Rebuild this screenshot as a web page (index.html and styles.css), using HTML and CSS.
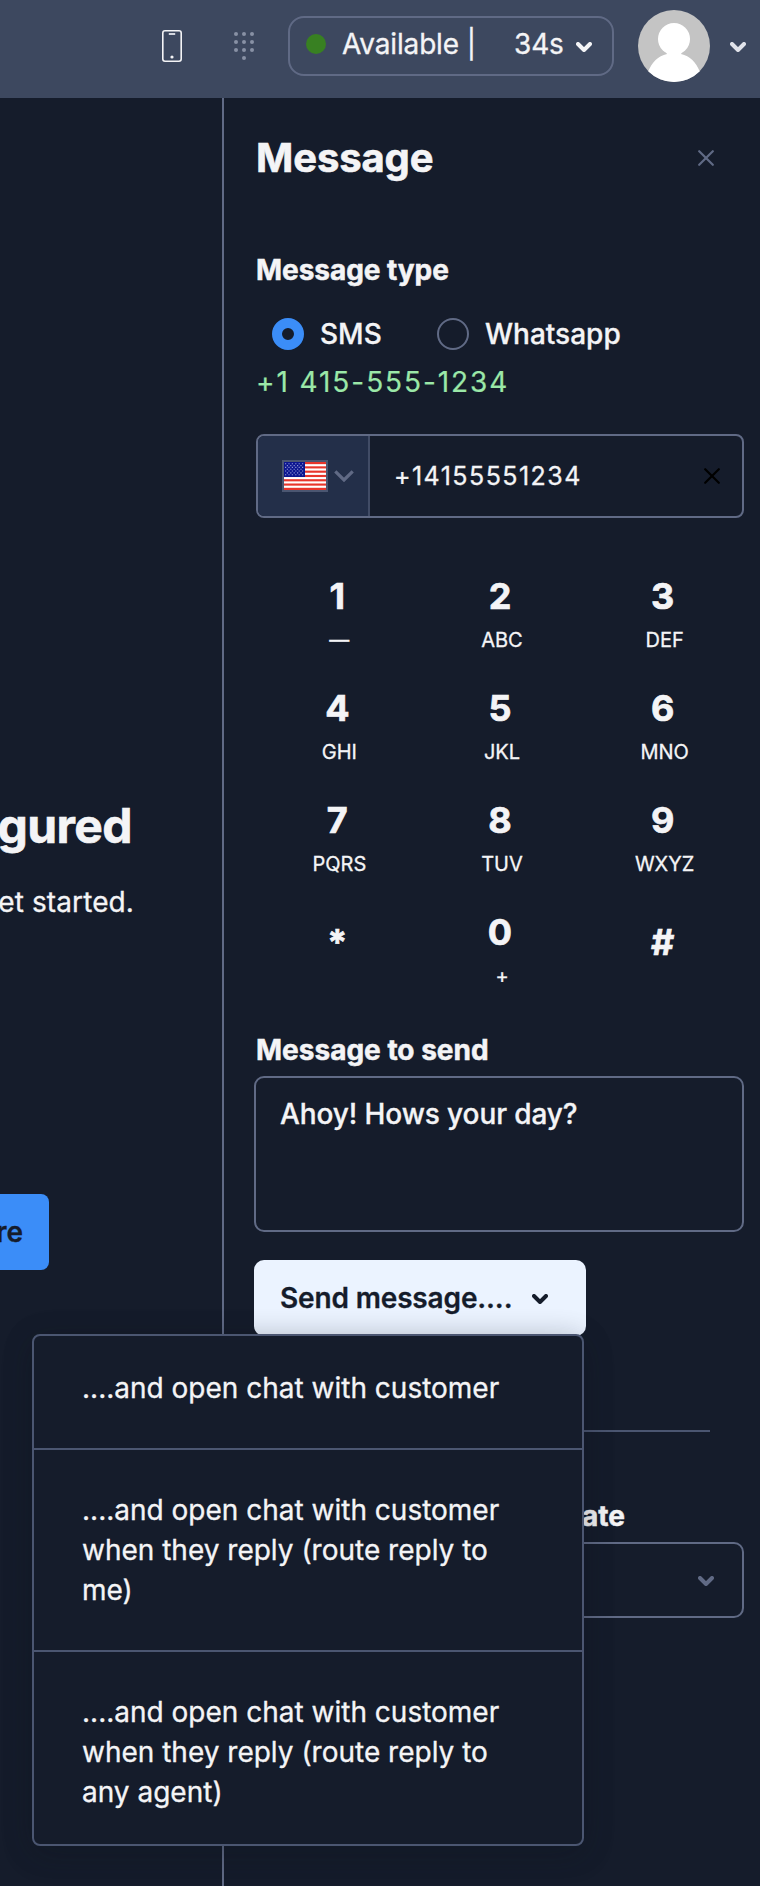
FILE: index.html
```html
<!DOCTYPE html>
<html lang="en">
<head>
<meta charset="utf-8">
<title>Message</title>
<link rel="stylesheet" href="styles.css">
</head>
<body>
<div class="app">
  <header class="topbar">
    <svg class="icon-phone" width="20" height="32" viewBox="0 0 20 32" fill="none" stroke="#f4f4f6" stroke-width="1.6"><rect x=".8" y=".8" width="18.4" height="30.4" rx="2.2"/><path d="M6.8 4h6.4" stroke="#d4d7df" stroke-width="2"/><circle cx="10" cy="27" r="1.6" fill="#f4f4f6" stroke="none"/></svg>
    <svg class="icon-dialpad" width="20" height="28" viewBox="0 0 20 28" fill="#8891a5"><circle cx="2" cy="2" r="2"/><circle cx="10" cy="2" r="2"/><circle cx="18" cy="2" r="2"/><circle cx="2" cy="10" r="2"/><circle cx="10" cy="10" r="2"/><circle cx="18" cy="10" r="2"/><circle cx="2" cy="18" r="2"/><circle cx="10" cy="18" r="2"/><circle cx="18" cy="18" r="2"/><circle cx="10" cy="26" r="2"/></svg>
    <div class="status">
      <span class="status-dot"></span>
      <span class="status-name">Available |</span>
      <span class="status-time">34s</span>
      <svg class="chevron" width="16" height="10" viewBox="0 0 16 10"><path d="M2 2l6 6 6-6"/></svg>
    </div>
    <svg class="avatar" width="72" height="72" viewBox="0 0 72 72"><defs><clipPath id="round"><circle cx="36" cy="36" r="36"/></clipPath></defs><g clip-path="url(#round)"><rect width="72" height="72" fill="#c4c4c4"/><circle cx="36" cy="29" r="16" fill="#fff"/><path d="M28 42h16l-1 2C52 46 58 52 62 62v10H10V62C14 52 20 46 29 44z" fill="#fff"/></g></svg>
    <svg class="chevron chevron-user" width="16" height="10" viewBox="0 0 16 10"><path d="M2 2l6 6 6-6"/></svg>
  </header>

  <div class="columns">
    <main class="canvas">
      <h1 class="canvas-title">gured</h1>
      <p class="canvas-text">et started.</p>
      <button class="canvas-button">re</button>
    </main>

    <aside class="panel">
      <div class="panel-head">
        <h2 class="panel-title">Message</h2>
        <svg class="close" width="16" height="16" viewBox="0 0 16 16"><path d="M1.2 1.2l13.6 13.6M14.8 1.2L1.2 14.8"/></svg>
      </div>

      <div class="label label-type">Message type</div>
      <div class="radios">
        <div class="radio"><span class="radio-dot radio-on"></span><span class="radio-text">SMS</span></div>
        <div class="radio radio-whatsapp"><span class="radio-dot"></span><span class="radio-text">Whatsapp</span></div>
      </div>
      <div class="number">+1 415-555-1234</div>

      <div class="field">
        <div class="country">
          <svg class="flag" width="42" height="28" viewBox="0 0 42 28"><rect width="42" height="28" fill="#fff"/><g fill="#e8352b"><rect width="42" height="2.15"/><rect y="4.3" width="42" height="2.15"/><rect y="8.6" width="42" height="2.15"/><rect y="12.9" width="42" height="2.15"/><rect y="17.2" width="42" height="2.15"/><rect y="21.5" width="42" height="2.15"/><rect y="25.8" width="42" height="2.2"/></g><rect width="21" height="15" fill="#0c1690"/><g stroke="#8e93d2" stroke-width="1.1" stroke-dasharray="1.2 2.2"><path d="M1 1.8h19M1 5.4h19M1 9h19M1 12.8h19"/><path d="M2.8 3.6h17M2.8 7.2h17M2.8 10.9h17"/></g></svg>
          <svg class="country-arrow" width="20" height="12" viewBox="0 0 20 12"><path d="M1.3 1.3L10 10l8.7-8.7"/></svg>
        </div>
        <span class="field-value">+14155551234</span>
        <svg class="clear" width="16" height="16" viewBox="0 0 16 16"><path d="M1.2 1.2l13.6 13.6M14.8 1.2L1.2 14.8"/></svg>
      </div>

      <div class="keypad">
        <div class="key"><b>1</b><span>—</span></div>
        <div class="key"><b>2</b><span>ABC</span></div>
        <div class="key"><b>3</b><span>DEF</span></div>
        <div class="key"><b>4</b><span>GHI</span></div>
        <div class="key"><b>5</b><span>JKL</span></div>
        <div class="key"><b>6</b><span>MNO</span></div>
        <div class="key"><b>7</b><span>PQRS</span></div>
        <div class="key"><b>8</b><span>TUV</span></div>
        <div class="key"><b>9</b><span>WXYZ</span></div>
        <div class="key key-symbol"><b>*</b></div>
        <div class="key"><b>0</b><span>+</span></div>
        <div class="key key-symbol"><b>#</b></div>
      </div>

      <div class="label label-message">Message to send</div>
      <div class="textarea">Ahoy! Hows your day?</div>

      <div class="send-wrap">
        <button class="send">Send message....
          <svg class="chevron" width="16" height="10" viewBox="0 0 16 10"><path d="M2 2l6 6 6-6"/></svg>
        </button>
        <div class="menu">
          <div class="menu-item">....and open chat with customer</div>
          <div class="menu-item">....and open chat with customer when they reply (route reply to me)</div>
          <div class="menu-item">....and open chat with customer when they reply (route reply to any agent)</div>
        </div>
      </div>

      <div class="divider"></div>
      <div class="label label-template">ate</div>
      <div class="select">
        <svg class="chevron" width="16" height="10" viewBox="0 0 16 10"><path d="M2 2l6 6 6-6"/></svg>
      </div>
    </aside>
  </div>
</div>
</body>
</html>
```
FILE: styles.css
```css
* { box-sizing: border-box; }
body {
  margin: 0;
  background: #151c2b;
  color: #f4f4f6;
  font-family: Inter, "Liberation Sans", sans-serif;
  font-size: 28px;
  line-height: 40px;
  -webkit-text-stroke: 0.3px currentColor;
}
h1, h2, p { margin: 0; }
button { border: 0; font: inherit; }
svg { display: block; flex: none; }

.app { width: 760px; height: 1886px; overflow: hidden; display: flex; flex-direction: column; }

.topbar { height: 98px; flex: none; background: #3d485f; display: flex; align-items: flex-start; padding-left: 162px; }
.icon-phone { margin-top: 30px; }
.icon-dialpad { margin: 32px 0 0 52px; }
.status {
  width: 326px; height: 60px; margin: 16px 0 0 34px; padding-left: 16px;
  border: 2px solid #606a85; border-radius: 16px;
  display: flex; align-items: center;
}
.status-dot { width: 20px; height: 20px; margin-top: -4px; border-radius: 50%; background: #388022; }
.status-name { margin: -5px 0 0 16px; width: 172px; white-space: nowrap; letter-spacing: -0.15px; }
.status-time { margin-top: -5px; width: 62px; letter-spacing: -0.15px; }
.status .chevron { margin-top: 2px; }
.chevron { fill: none; stroke: currentColor; stroke-width: 4; stroke-linecap: round; stroke-linejoin: round; }
.avatar { margin: 10px 0 0 24px; }
.chevron-user { margin: 42px 0 0 20px; color: #e1e3ea; }

.columns { flex: 1; display: flex; min-height: 0; }
.canvas { width: 222px; flex: none; overflow: hidden; display: flex; flex-direction: column; align-items: flex-start; }
.canvas-title {
  width: 132px; margin-top: 698px; font-size: 48px; line-height: 60px; font-weight: 700; letter-spacing: -0.6px;
  -webkit-text-stroke-width: 0.6px; display: flex; justify-content: flex-end;
}
.canvas-text { width: 134px; margin-top: 26px; display: flex; justify-content: flex-end; white-space: nowrap; letter-spacing: 0.1px; }
.canvas-button {
  width: 49px; height: 76px; margin-top: 272px; padding: 0 26px 0 0;
  background: #3b8df8; color: #151c2b; border-radius: 0 8px 8px 0;
  font-weight: 600; display: flex; align-items: center; justify-content: flex-end;
}

.panel { width: 538px; border-left: 2px solid #606a85; padding: 36px 16px 0 32px; }
.panel-head { display: flex; align-items: center; justify-content: space-between; padding-right: 30px; }
.panel-title { font-size: 40px; line-height: 48px; font-weight: 700; letter-spacing: -0.1px; -webkit-text-stroke-width: 0.6px; }
.close { fill: none; stroke: #606a85; stroke-width: 2.2; stroke-linecap: round; }
.label { font-weight: 700; -webkit-text-stroke-width: 0.5px; }
.label-type { margin-top: 68px; letter-spacing: -0.05px; }
.radios { margin-top: 28px; padding-left: 16px; display: flex; }
.radio { display: flex; gap: 16px; height: 32px; line-height: 32px; font-weight: 500; }
.radio:first-child { width: 165px; }
.radio-dot { width: 32px; height: 32px; border: 2px solid #606a85; border-radius: 50%; }
.radio-on { border: 10px solid #3b8df8; }
.number { margin-top: 12px; color: #9be8a8; letter-spacing: 1.93px; -webkit-text-stroke-width: 0.2px; }

.field { height: 84px; margin-top: 32px; border: 2px solid #606a85; border-radius: 8px; display: flex; align-items: center; overflow: hidden; }
.country { width: 112px; height: 80px; background: #232f49; border-right: 2px solid #414c66; display: flex; align-items: center; padding-left: 24px; gap: 6px; }
.flag { width: 46px; height: 32px; border: 2px solid #4b5671; }
.country-arrow { fill: none; stroke: #606a85; stroke-width: 3.2; }
.field-value { flex: 1; padding-left: 24px; font-size: 25px; letter-spacing: 1.45px; }
.clear { margin-right: 22px; fill: none; stroke: #000; stroke-width: 2.2; stroke-linecap: round; }

.keypad { margin-top: 56px; display: grid; grid-template-columns: repeat(3, 1fr); grid-auto-rows: 112px; }
.key { display: flex; flex-direction: column; align-items: center; gap: 10px; }
.key b { font-size: 36px; line-height: 44px; font-weight: 700; -webkit-text-stroke-width: 0.7px; }
.key span { padding-left: 4px; font-size: 20px; line-height: 24px; }
.key-symbol { padding-top: 10px; }

.label-message { margin-top: 8px; }
.textarea { height: 156px; margin: 6px 0 0 -2px; padding: 16px 24px; border: 2px solid #606a85; border-radius: 10px; font-weight: 500; letter-spacing: -0.1px; }
.send-wrap { position: relative; margin: 28px 0 0 -2px; }
.send {
  width: 332px; height: 76px; padding: 0 0 0 26px; border-radius: 10px;
  background: #ebf3ff; color: #151c2b; font-weight: 600; text-align: left; letter-spacing: -0.15px;
  display: flex; align-items: center; gap: 20px; white-space: nowrap;
}
.send .chevron { margin-top: 2px; }
.menu {
  position: absolute; top: 74px; left: -222px; width: 552px; height: 512px;
  background: #151c2b; border: 2px solid #4b5671; border-radius: 8px;
  box-shadow: 0 8px 32px rgba(18, 28, 45, 0.2), 0 4px 32px rgba(0, 0, 0, 0.14);
}
.menu-item { padding: 40px 48px; }
.menu-item + .menu-item { border-top: 2px solid #4b5671; }
.menu-item:first-child { padding-top: 32px; }
.menu-item:last-child { padding-bottom: 32px; }

.divider { width: 454px; height: 2px; margin-top: 94px; background: #4b5671; }
.label-template { margin-top: 64px; width: 369px; text-align: right; }
.select { height: 76px; margin: 6px 0 0 -2px; border: 2px solid #606a85; border-radius: 10px; color: #606a85; display: flex; align-items: center; justify-content: flex-end; padding: 2px 28px 0 0; }
```
